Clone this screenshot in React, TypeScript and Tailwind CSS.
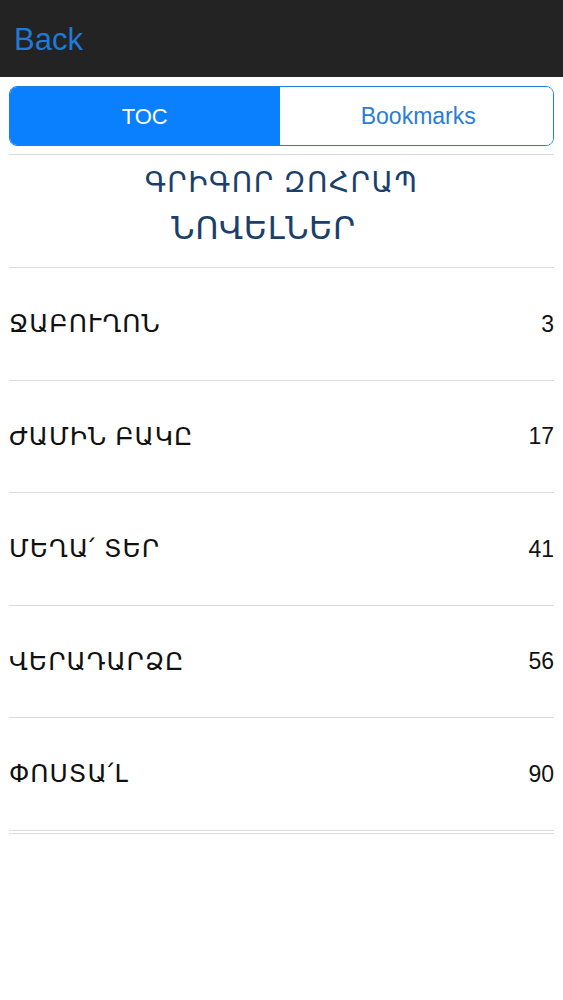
const chapters = [
  { title: "ՋԱԲՈՒՂՈՆ", page: 3 },
  { title: "ԺԱՄԻՆ ԲԱԿԸ", page: 17 },
  { title: "ՄԵՂԱ՛ ՏԵՐ", page: 41 },
  { title: "ՎԵՐԱԴԱՐՁԸ", page: 56 },
  { title: "ՓՈՍՏԱ՛Լ", page: 90 },
];

export default function App() {
  return (
    <div className="min-h-[1000px] w-[563px] bg-white font-['Liberation_Sans','DejaVu_Sans',sans-serif]">
      <header className="flex h-[77px] items-center bg-[#232323] px-[14px]">
        <span className="pt-[2px] text-[31px] leading-none text-[#2079d6]">Back</span>
      </header>

      <div className="mx-[9px] mt-[9px] flex h-[60px] overflow-hidden rounded-lg border border-[#1d7fe2]">
        <div className="flex flex-1 items-center justify-center bg-[#0a80ff] text-[22px] text-white">TOC</div>
        <div className="flex flex-1 items-center justify-center bg-white pl-[4px] text-[23px] text-[#2a7dd6]">Bookmarks</div>
      </div>

      <div className="mx-[9px] mt-[8px] border-t border-[#dcdcdc]">
        <div className="flex h-[112px] flex-col items-center justify-center pb-[8px] text-[#1b3f6b]">
          <div className="text-[28px] leading-[34px] tracking-[1.5px]">ԳՐԻԳՈՐ ԶՈՀՐԱՊ</div>
          <div className="mt-[8px] pr-[36px] text-[32px] leading-[40px] tracking-[0.5px]">ՆՈՎԵԼՆԵՐ</div>
        </div>
        <ul>
          {chapters.map((c) => (
            <li key={c.title} className="flex h-[112.6px] items-center justify-between border-t border-[#dcdcdc] text-[#111]">
              <span className="text-[25px] tracking-[1px]">{c.title}</span>
              <span className="text-[23px]">{c.page}</span>
            </li>
          ))}
        </ul>
        <div className="border-t border-[#dcdcdc]" />
        <div className="mt-[2px] border-t border-[#dcdcdc]" />
      </div>
    </div>
  );
}
